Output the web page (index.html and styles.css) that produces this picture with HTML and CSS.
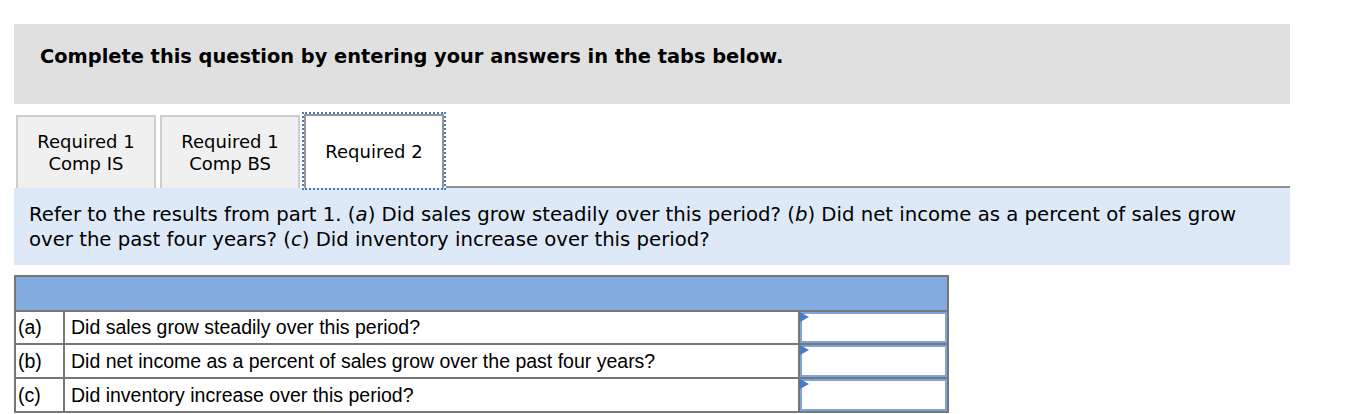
FILE: index.html
```html
<!DOCTYPE html>
<html>
<head>
<meta charset="utf-8">
<link rel="stylesheet" href="styles.css">
</head>
<body>
<div class="page">
  <div class="instructions">Complete this question by entering your answers in the tabs below.</div>
  <div class="tabs">
    <div class="tab">Required 1<br>Comp IS</div>
    <div class="tab">Required 1<br>Comp BS</div>
    <div class="tab active">Required 2</div>
    <div class="tab-rest"></div>
  </div>
  <div class="prompt">Refer to the results from part 1. <span class="mark">(<i>a</i>)</span> Did sales grow steadily over this period? <span class="mark">(<i>b</i>)</span> Did net income as a percent of sales grow over the past four years? <span class="mark">(<i>c</i>)</span> Did inventory increase over this period?</div>
  <div class="answers">
    <div class="head"></div>
    <div class="lbl">(a)</div>
    <div class="q">Did sales grow steadily over this period?</div>
    <div class="ans"><div class="field"></div></div>
    <div class="lbl">(b)</div>
    <div class="q">Did net income as a percent of sales grow over the past four years?</div>
    <div class="ans"><div class="field"></div></div>
    <div class="lbl">(c)</div>
    <div class="q">Did inventory increase over this period?</div>
    <div class="ans"><div class="field"></div></div>
  </div>
</div>
</body>
</html>
```
FILE: styles.css
```css
html, body {
  margin: 0;
  padding: 0;
  background: #fff;
}
.page {
  padding: 24px 0 0 14px;
  width: 1276px;
  font-family: "DejaVu Sans", Verdana, sans-serif;
  color: #000;
}
.instructions {
  background: #e0e0e0;
  height: 80px;
  box-sizing: border-box;
  padding: 21px 0 0 26px;
  font-weight: bold;
  font-size: 19.4px;
  line-height: 24px;
}
.tabs {
  display: flex;
  align-items: flex-end;
  height: 84px;
}
.tab {
  box-sizing: border-box;
  width: 140px;
  height: 73px;
  background: #f0f0f0;
  border: 2px solid #cdcdcd;
  border-bottom: none;
  display: flex;
  align-items: center;
  justify-content: center;
  text-align: center;
  font-size: 18px;
  line-height: 22px;
  margin-right: 4px;
}
.tab:first-child { margin-left: 2px; }
.tab.active {
  height: 74px;
  background: #fff;
  border: 2px solid #969696;
  border-bottom: none;
  outline: 2px dotted #4a78c0;
  outline-offset: 0;
  margin: 0 2px 0 0;
}
.tab-rest {
  flex: 1;
  height: 0;
  border-bottom: 2px solid #8f8f8f;
}
.prompt {
  background: #dde9f7;
  height: 77px;
  box-sizing: border-box;
  padding: 14px 30px 0 15px;
  font-size: 19.7px;
  line-height: 25px;
}
.mark {
  white-space: nowrap;
}
.answers {
  margin-top: 10px;
  width: 935px;
  box-sizing: border-box;
  display: grid;
  grid-template-columns: 47px 733px 147px;
  grid-template-rows: 33px 31px 32px 32px;
  gap: 2px;
  padding: 2px;
  background: #777;
  font-family: "Liberation Sans", Arial, sans-serif;
  font-size: 19.5px;
}
.answers > div {
  background: #fff;
}
.answers .head {
  grid-column: 1 / 4;
  background: #82abdf;
}
.answers .lbl,
.answers .q {
  display: flex;
  align-items: center;
}
.answers .lbl {
  padding-left: 2px;
}
.answers .q {
  padding-left: 6px;
}
.field {
  position: relative;
  box-sizing: border-box;
  height: 100%;
  border: 2px solid #7da5dc;
  background: #fff;
}
.field::before {
  content: "";
  position: absolute;
  left: -2px;
  top: -2px;
  border-left: 9px solid #4a7cc8;
  border-top: 5px solid transparent;
  border-bottom: 5px solid transparent;
}
```
